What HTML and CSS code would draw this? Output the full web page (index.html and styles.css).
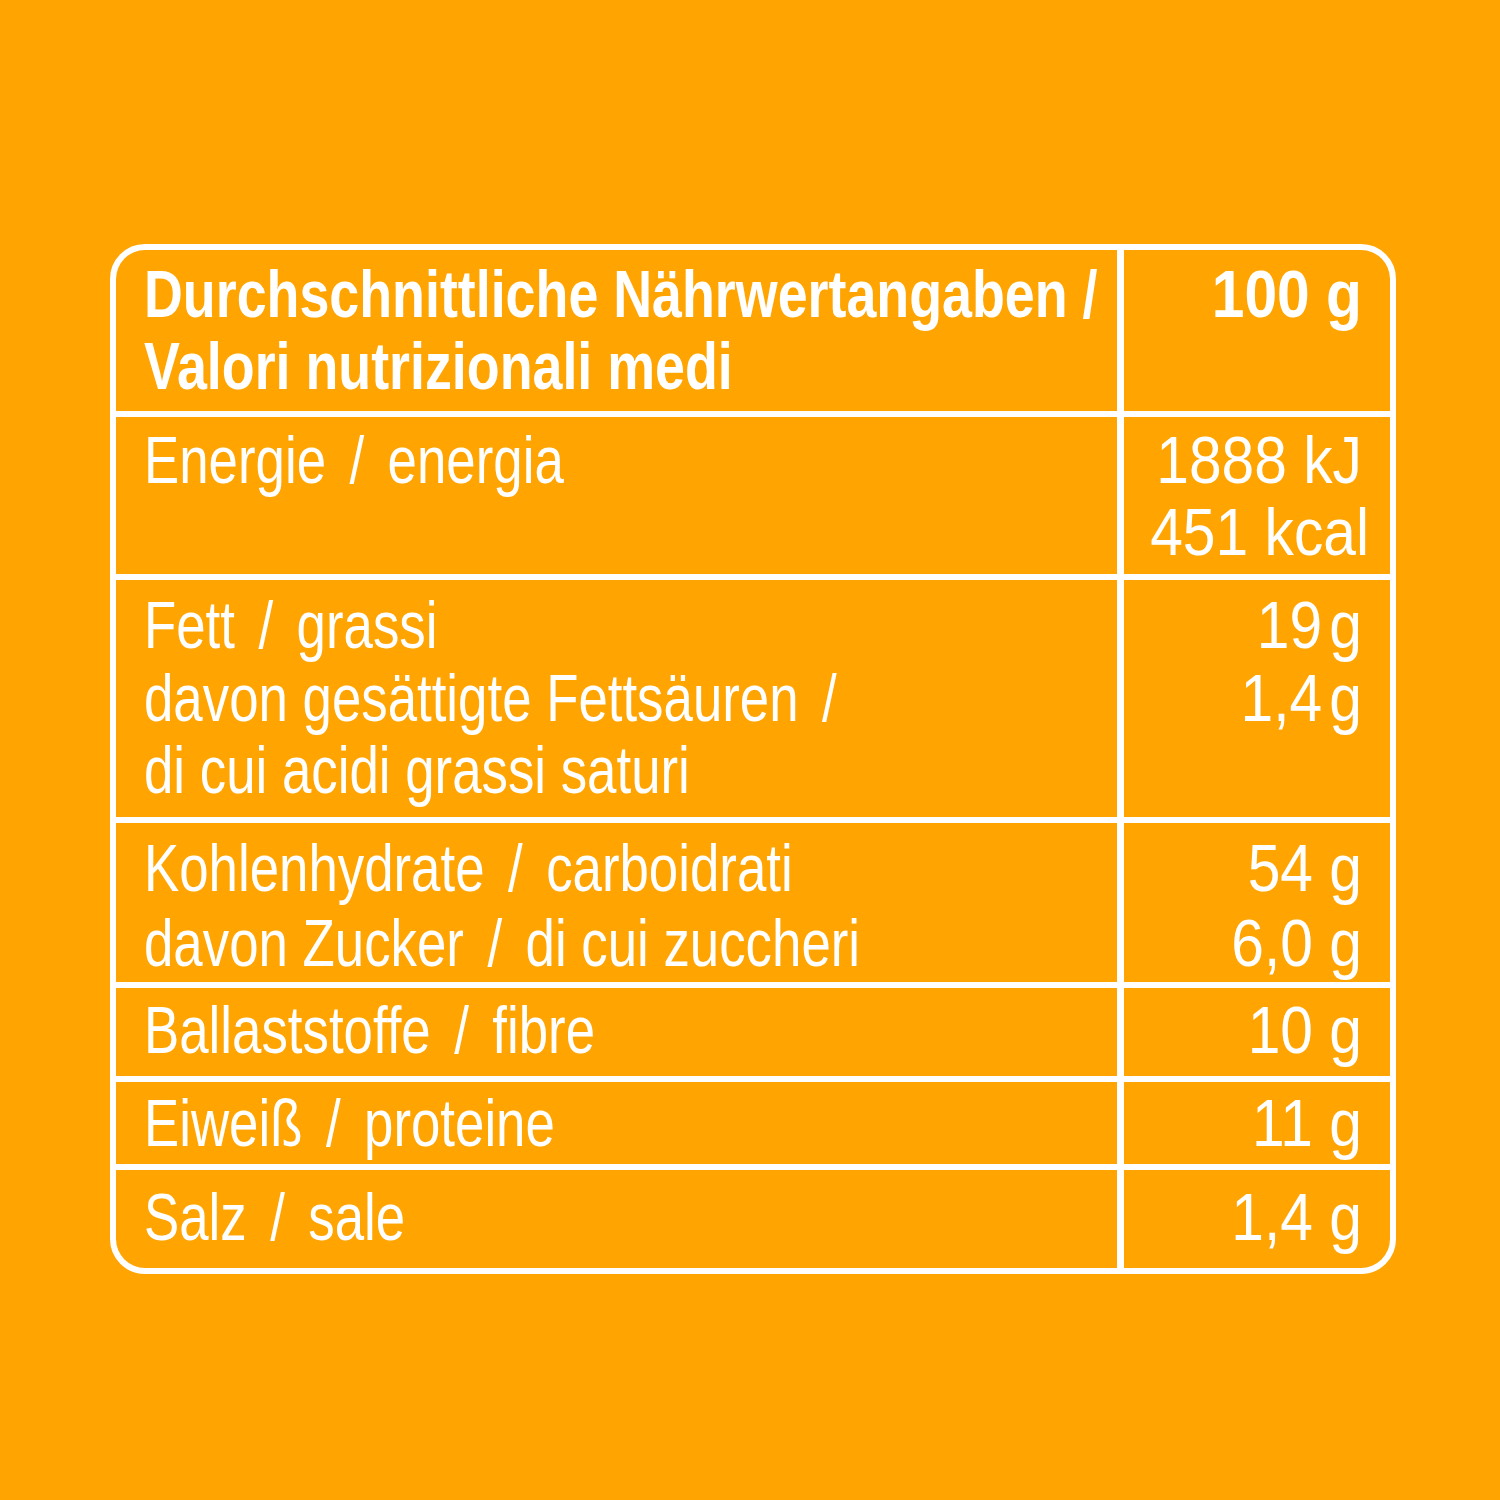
FILE: index.html
```html
<!DOCTYPE html>
<html lang="de">
<head>
<meta charset="utf-8">
<title>Nährwerte</title>
<link rel="stylesheet" href="styles.css">
</head>
<body>
<main class="page">
  <div class="table">
    <div class="cell lab r-head"><span class="t b">Durchschnittliche Nährwertangaben /<br>Valori nutrizionali medi</span></div>
    <div class="cell val r-head"><span class="t b">100 g</span></div>

    <div class="cell lab r-energy"><span class="t">Energie <span class="sl">/</span> energia</span></div>
    <div class="cell val r-energy"><span class="t"><span class="line">1888 kJ</span><span class="line kcal">451 kcal</span></span></div>

    <div class="cell lab r-fat"><span class="t">Fett <span class="sl">/</span> grassi<br>davon gesättigte Fettsäuren <span class="sl">/</span><br>di cui acidi grassi saturi</span></div>
    <div class="cell val r-fat"><span class="t"><span class="ns">19</span>g<br><span class="ns">1,4</span>g</span></div>

    <div class="cell lab r-carb"><span class="t">Kohlenhydrate <span class="sl">/</span> carboidrati<br>davon Zucker <span class="sl">/</span> di cui zuccheri</span></div>
    <div class="cell val r-carb"><span class="t">54 g<br>6,0 g</span></div>

    <div class="cell lab r-fib"><span class="t">Ballaststoffe <span class="sl">/</span> fibre</span></div>
    <div class="cell val r-fib"><span class="t">10 g</span></div>

    <div class="cell lab r-prot"><span class="t">Eiweiß <span class="sl">/</span> proteine</span></div>
    <div class="cell val r-prot"><span class="t">11 g</span></div>

    <div class="cell lab r-salt"><span class="t">Salz <span class="sl">/</span> sale</span></div>
    <div class="cell val r-salt"><span class="t">1,4 g</span></div>
  </div>
</main>
</body>
</html>
```

FILE: styles.css
```css
html, body {
  margin: 0;
  padding: 0;
  background: #FFA400;
}

.page {
  width: 1500px;
  height: 1500px;
  box-sizing: border-box;
  padding: 244px 0 0 110px;
  font-family: "Liberation Sans", Arial, sans-serif;
  color: #ffffff;
}

.table {
  width: 1286px;
  box-sizing: border-box;
  border: 6px solid #ffffff;
  border-radius: 35px;
  overflow: hidden;
  background: #ffffff;
  display: grid;
  grid-template-columns: 1001px 266px;
  grid-template-rows: 161px 157px 237px 159px 88px 82px 98px;
  column-gap: 7px;
  row-gap: 6px;
}

.cell {
  background: #FFA400;
  min-width: 0;
  box-sizing: border-box;
  padding-top: 8px;
  font-size: 66px;
  line-height: 72px;
  white-space: nowrap;
}

.lab {
  padding-left: 28px;
}

.val {
  padding-right: 28px;
  text-align: right;
}

.t {
  display: block;
  font-weight: 400;
}

.lab .t {
  transform: scaleX(0.80);
  transform-origin: left top;
}

.val .t {
  transform: scaleX(0.89);
  transform-origin: right top;
}

.lab .t.b {
  font-weight: 700;
  transform: scaleX(0.815);
}

.val .t.b {
  font-weight: 700;
  transform: scaleX(0.89);
}

.sl {
  margin: 0 11px;
}

.ns {
  margin-right: 8px;
}

.line {
  display: block;
}

.kcal {
  padding-right: 9px;
}

.r-head { padding-top: 8px; }
.r-energy { padding-top: 7px; }
.r-fat { padding-top: 9px; line-height: 72.5px; }
.r-carb { padding-top: 8px; line-height: 75px; }
.r-fib { padding-top: 6px; }
.r-prot { padding-top: 5px; }
.r-salt { padding-top: 11px; }
```
